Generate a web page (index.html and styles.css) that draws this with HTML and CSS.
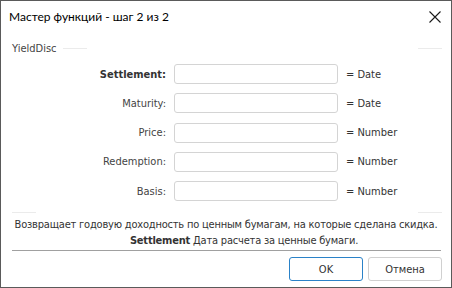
FILE: index.html
```html
<!DOCTYPE html>
<html lang="ru">
<head>
  <meta charset="UTF-8" />
  <title>Мастер функций</title>
  <link rel="stylesheet" href="styles.css">
</head>
<body>
  <div class="window">
    <div class="titlebar">
      <span class="title">Мастер функций - шаг 2 из 2</span>
      <svg class="close" width="12" height="12" viewBox="0 0 12 12">
        <path d="M0.5 0.5 L11.5 11.5 M11.5 0.5 L0.5 11.5" stroke="#1a1a1a" stroke-width="1.1" fill="none"/>
      </svg>
    </div>

    <div class="group">
      <div class="group-head">
        <span class="legend">YieldDisc</span>
        <span class="frag"></span>
        <span class="spacer"></span>
        <span class="frag"></span>
      </div>

      <div class="args">
        <label class="bold">Settlement:</label>
        <div class="field"></div>
        <span class="type">= Date</span>

        <label>Maturity:</label>
        <div class="field"></div>
        <span class="type">= Date</span>

        <label>Price:</label>
        <div class="field"></div>
        <span class="type">= Number</span>

        <label>Redemption:</label>
        <div class="field"></div>
        <span class="type">= Number</span>

        <label>Basis:</label>
        <div class="field"></div>
        <span class="type">= Number</span>
      </div>

      <div class="group-foot">
        <span class="frag"></span>
        <span class="spacer"></span>
        <span class="frag"></span>
      </div>
    </div>

    <div class="desc">
      <p>Возвращает годовую доходность по ценным бумагам, на которые сделана скидка.</p>
      <p class="arg-help"><b>Settlement</b> Дата расчета за ценные бумаги.</p>
    </div>

    <div class="sep"></div>

    <div class="buttons">
      <button class="default">OK</button>
      <button>Отмена</button>
    </div>
  </div>
</body>
</html>
```

FILE: styles.css
```css
body {
  margin: 0;
  background: #fff;
  font-family: 'DejaVu Sans Condensed', 'DejaVu Sans', sans-serif;
  font-size: 11px;
  color: #333;
}

.window {
  width: 452px;
  height: 288px;
  box-sizing: border-box;
  border: 1px solid #5a5a5a;
  display: flex;
  flex-direction: column;
}

.window > * {
  flex-shrink: 0;
}

.titlebar {
  height: 31px;
  display: flex;
  align-items: center;
  justify-content: space-between;
  padding: 0 10px 0 8px;
}

.title {
  font-family: Lato, sans-serif;
  font-size: 12px;
  color: #000;
}

.group {
  padding: 0 9px 0 11px;
}

.group-head,
.group-foot {
  display: flex;
  align-items: center;
}

.group-head {
  height: 32px;
}

.legend {
  color: #444;
  margin-right: 6px;
}

.frag {
  width: 24px;
  height: 1px;
  background: #ebebeb;
}

.spacer {
  flex: 1;
}

.args {
  display: grid;
  grid-template-columns: 154px 164px auto;
  column-gap: 8px;
  row-gap: 9.25px;
  align-items: center;
}

.args label {
  text-align: right;
  color: #444;
}

.args label.bold {
  font-weight: bold;
  color: #333;
}

.field {
  height: 18px;
  border: 1px solid #d4d4d4;
  border-radius: 3px;
}

.type {
  color: #333;
}

.group-foot {
  margin-top: 11px;
}

.desc {
  padding: 5px 11px 0 11px;
  letter-spacing: -0.2px;
}

.desc p {
  margin: 0 0 2px 0;
  text-align: center;
  line-height: 14px;
  white-space: nowrap;
}

.desc .arg-help {
  padding-left: 36px;
}

.sep {
  height: 1px;
  background: #a0a0a0;
  margin: 0 10px 0 11px;
}

.buttons {
  display: flex;
  justify-content: flex-end;
  gap: 5px;
  padding: 6px 9px 0 0;
}

button {
  width: 74px;
  height: 24px;
  font-family: 'DejaVu Sans Condensed', 'DejaVu Sans', sans-serif;
  font-size: 11px;
  color: #333;
  background: #fff;
  border: 1px solid #d0d0d0;
  border-radius: 3px;
}

button.default {
  border-color: #2a82c8;
}
```
